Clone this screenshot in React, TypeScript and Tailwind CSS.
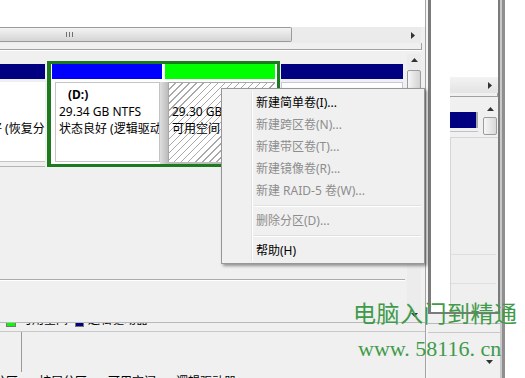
import React from "react";

const ui = "font-['Noto_Sans','Noto_Sans_CJK_SC',sans-serif]";

function Tri({ dir }: { dir: "up" | "down" | "right" }) {
  const w = dir === "right" ? 4 : 7;
  const h = dir === "right" ? 7 : 4;
  const pts = dir === "up" ? "0,4 3.5,0 7,4" : dir === "down" ? "0,0 7,0 3.5,4" : "0,0 4,3.5 0,7";
  return (
    <svg width={w} height={h} viewBox={`0 0 ${w} ${h}`}>
      <polygon points={pts} fill="#333" />
    </svg>
  );
}

function Grip() {
  return (
    <div className="flex gap-[2px]">
      <span className="h-[5px] w-px bg-[#707070]" />
      <span className="h-[5px] w-px bg-[#707070]" />
      <span className="h-[5px] w-px bg-[#707070]" />
    </div>
  );
}

function Swatch({ color, w = 10 }: { color: string; w?: number }) {
  return <span className={`inline-block h-[10px] shrink-0 border border-[#777] ${color}`} style={{ width: w }} />;
}

const menuItems: (string | { label: string; off?: boolean })[] = [
  { label: "新建简单卷(I)..." },
  { label: "新建跨区卷(N)...", off: true },
  { label: "新建带区卷(T)...", off: true },
  { label: "新建镜像卷(R)...", off: true },
  { label: "新建 RAID-5 卷(W)...", off: true },
  "sep",
  { label: "删除分区(D)...", off: true },
  "sep",
  { label: "帮助(H)" },
];

function ContextMenu() {
  return (
    <div className="absolute left-[221px] top-[88px] w-[204px] border border-[#979797] bg-[#f0f0f0] pb-[1px] pt-[3px] shadow-[2px_2px_3px_rgba(0,0,0,0.4)]">
      <div className="absolute bottom-[2px] left-[29px] top-[2px] w-px bg-[#e2e3e3]" />
      <div className="absolute bottom-[2px] left-[30px] top-[2px] w-px bg-white" />
      {menuItems.map((it, i) =>
        typeof it === "string" ? (
          <div key={i} className="flex h-[8px] flex-col justify-center pl-[32px] pr-[3px]">
            <div className="h-px bg-[#e0e0e0]" />
            <div className="h-px bg-white" />
          </div>
        ) : (
          <div
            key={i}
            className={`flex h-[22px] items-center pl-[34px] text-[12px] ${it.off ? "text-[#8d8d8d]" : "text-black"}`}
          >
            {it.label}
          </div>
        )
      )}
    </div>
  );
}

function DiskRow() {
  return (
    <div className={`flex h-[106px] text-[12px] leading-[17px] text-black ${ui}`}>
      {/* partial partition on the left */}
      <div className="w-[45px] border-b border-[#b5b5b5]">
        <div className="mt-[3px] h-[15px] bg-[#000080]" />
        <div className="mt-[3px] h-[80px] overflow-hidden border-b border-[#c4c4c4] bg-white pt-[4px]">
          <div className="h-[34px]" />
          <div className="ml-[-46px] whitespace-nowrap">状态良好 (恢复分区)</div>
        </div>
      </div>

      {/* selected extended partition */}
      <div className="ml-[2px] h-[106px] w-[233px] border-[3px] border-l-4 border-[#1e7a1e] bg-white">
        <div className="flex h-[15px]">
          <div className="ml-[1px] w-[110px] bg-[#0000ff]" />
          <div className="ml-[3px] w-[110px] bg-[#00ff00]" />
        </div>
        <div className="mt-[3px] flex h-[82px]">
          <div className="ml-[4px] h-[80px] w-[105px] overflow-hidden whitespace-nowrap border border-[#c4c4c4] bg-white pl-[3px] pt-[3px]">
            <div className="pl-[9px] font-bold">(D:)</div>
            <div>29.34 GB NTFS</div>
            <div>状态良好 (逻辑驱动器)</div>
          </div>
          <div className="h-[82px] w-[8px] bg-[linear-gradient(90deg,#dedede,#bcbcbc)]" />
          <div className="h-[82px] w-[107px] bg-[#bcbcbc] pb-[2px]">
            <div className="h-[80px] overflow-hidden whitespace-nowrap border-l border-t border-[#a8a8a8] bg-[repeating-linear-gradient(135deg,#ffffff_0px,#ffffff_4px,#a9a9a9_4px,#a9a9a9_5px)] pl-[3px] pt-[3px]">
              <div className="h-[17px]" />
              <div>29.30 GB</div>
              <div>可用空间</div>
            </div>
          </div>
        </div>
      </div>

      {/* partition on the right */}
      <div className="ml-[1px] w-[122px]">
        <div className="mt-[3px] h-[15px] bg-[#000080]" />
        <div className="mt-[3px] h-[80px] border border-[#c6c6e2] bg-white" />
      </div>
    </div>
  );
}

function VScroll({ h, thumbTop, thumbH }: { h: number; thumbTop: number; thumbH: number }) {
  return (
    <div className="flex w-[14px] flex-col bg-[#ececec]" style={{ height: h }}>
      <div className="flex h-[12px] items-center justify-center">
        <Tri dir="up" />
      </div>
      <div
        className="rounded-[2px] border border-[#9c9c9c] bg-[linear-gradient(90deg,#f6f6f6,#e2e2e2_55%,#d3d3d3)]"
        style={{ marginTop: thumbTop, height: thumbH }}
      />
      <div className="flex-1" />
      <div className="flex h-[12px] items-center justify-center">
        <Tri dir="down" />
      </div>
    </div>
  );
}

function LegendClip({ shift, items, lead }: { shift: number; items: { color: string; label: string; w: number; gap: number }[]; lead: number }) {
  return (
    <div className="flex h-[14px] items-end whitespace-nowrap text-[12px] leading-[14px] text-black" style={{ marginTop: shift, marginLeft: lead }}>
      <span>主分区</span>
      {items.map((it) => (
        <span key={it.label} className="flex items-end gap-[4px]" style={{ marginLeft: it.gap }}>
          <Swatch color={it.color} w={it.w} />
          <span>{it.label}</span>
        </span>
      ))}
    </div>
  );
}

function MainWindow() {
  return (
    <div className="flex h-full w-[428px]">
      <div className="flex w-[425px] flex-col">
        {/* upper list pane */}
        <div className="h-[28px] bg-white" />
        <div className="flex h-[16px] w-[421px] bg-[#ebebeb]">
          <div className="flex h-[15px] w-[292px] items-center rounded-r-[2px] border border-l-0 border-[#9b9b9b] bg-[linear-gradient(#f4f4f4,#e4e4e4_50%,#d4d4d4)]">
            <div className="ml-[66px]">
              <Grip />
            </div>
          </div>
          <div className="flex-1" />
          <div className="flex w-[16px] items-center justify-center">
            <Tri dir="right" />
          </div>
        </div>
        <div className="h-[7px] w-[422px] border-b border-r border-[#a0a0a0]" />
        <div className="h-px w-[422px] bg-white" />

        {/* disk pane */}
        <div className="flex h-[270px]">
          <div className="flex w-[405px] flex-col pt-[10px]">
            <DiskRow />
            <div className="h-[112px]" />
            <div className="h-px bg-[#ababab]" />
            <div className="h-px bg-white" />
          </div>
          <div className="ml-[2px] mt-[3px]">
            <VScroll h={267} thumbTop={4} thumbH={40} />
          </div>
        </div>

        {/* lower legend pane */}
        <div className="relative flex-1">
          <div className="h-px" />
          <div className="h-px bg-[#b9b9b9]" />
          <div className="h-[8px] overflow-hidden">
            <LegendClip
              shift={-10}
              lead={-36}
              items={[
                { color: "bg-[#00ff00]", label: "可用空间", w: 10, gap: 6 },
                { color: "bg-[#000080]", label: "逻辑驱动器", w: 9, gap: 7 },
              ]}
            />
          </div>
          <div className="h-px bg-[#c8c8c8]" />
          <div className="ml-[21px] h-[40px] w-px bg-[#9a9a9a]" />
          <div className="h-[6px] overflow-hidden">
            <LegendClip
              shift={3}
              lead={-18}
              items={[
                { color: "bg-[#1d6b1d]", label: "扩展分区", w: 11, gap: 6 },
                { color: "bg-[#00ff00]", label: "可用空间", w: 11, gap: 6 },
                { color: "bg-[#000080]", label: "逻辑驱动器", w: 10, gap: 6 },
              ]}
            />
          </div>
        </div>
      </div>
      <div className="w-px bg-[#a3a3a3]" />
      <div className="w-[2px] bg-[#f4f4f4]" />
    </div>
  );
}

function RightWindow() {
  return (
    <div className="flex h-full w-[72px] flex-col">
      <div className="flex h-[314px] border-b-2 border-l-[3px] border-r-2 border-[#7b7b7b]">
        <div className="w-[19px] bg-white" />
        <div className="flex w-[48px] flex-col">
          <div className="h-[77px] bg-white" />
          <div className="flex h-[16px] bg-[linear-gradient(#f3f3f3,#e3e3e3)]">
            <div className="flex-1" />
            <div className="mr-px flex w-[14px] items-center justify-center">
              <Tri dir="right" />
            </div>
          </div>
          <div className="h-[4px] border-b border-r border-[#a0a0a0]" />
          <div className="flex h-[40px]">
            <div className="w-[28px] pt-[15px]">
              <div className="h-[16px] border-r-2 border-[#a9a9a9] bg-[#000080]" />
              <div className="mt-[3px] h-px bg-[#c0c0d4]" />
            </div>
            <div className="ml-[5px] mt-[6px] flex w-[14px] flex-col">
              <div className="flex h-[11px] items-center justify-center">
                <Tri dir="up" />
              </div>
              <div className="mt-[3px] h-[18px] rounded-[2px] border border-[#9c9c9c] bg-[linear-gradient(90deg,#f6f6f6,#d9d9d9)]" />
            </div>
          </div>
          <div className="flex-1 border-l border-t border-[#d6d6d6] bg-[#efefef] pr-[2px]">
            <div className="h-[116px]" />
            <div className="h-px bg-[#dedede]" />
            <div className="h-[28px]" />
            <div className="h-px bg-[#dedede]" />
          </div>
        </div>
      </div>
      <div className="flex-1">
        <div className="h-[9px]" />
        <div className="h-px bg-[#b9b9b9]" />
        <div className="h-[8px]" />
        <div className="h-px bg-[#c8c8c8]" />
        <div className="ml-[58px] mt-[27px]">
          <Tri dir="down" />
        </div>
      </div>
    </div>
  );
}

export default function App() {
  return (
    <div className={`relative flex h-[378px] w-[525px] overflow-hidden bg-[#f0f0f0] ${ui}`}>
      <MainWindow />
      <RightWindow />
      <div className="flex w-[5px]">
        <div className="w-[2px] bg-[#c9c9c9]" />
        <div className="w-[3px] bg-[#8f8f8f]" />
      </div>
      <div className="flex-1 bg-white" />

      <ContextMenu />

      <div className="absolute left-[353px] top-[297px] font-['Noto_Sans_CJK_SC',serif] text-[23px] leading-[30px] tracking-[0.5px] text-[#3f9b4a]">
        电脑入门到精通
      </div>
      <div className="absolute left-[358px] top-[335px] font-['Liberation_Serif',serif] text-[22px] leading-[28px] text-[#3f9b4a]">
        www. 58116. cn
      </div>
    </div>
  );
}
